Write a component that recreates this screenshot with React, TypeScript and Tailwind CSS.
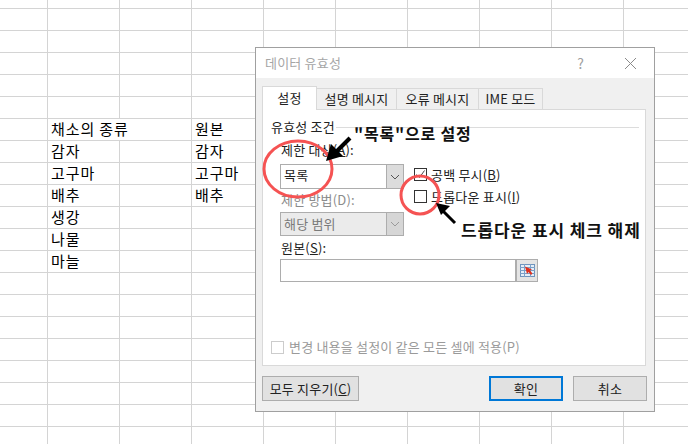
import React from 'react';

const FONT = '"Noto Sans CJK KR", "Noto Sans", sans-serif';

const rows: [string, string][] = [
  ['', ''], ['', ''], ['', ''], ['', ''], ['', ''],
  ['채소의 종류', '원본'],
  ['감자', '감자'],
  ['고구마', '고구마'],
  ['배추', '배추'],
  ['생강', ''],
  ['나물', ''],
  ['마늘', ''],
  ['', ''], ['', ''], ['', ''], ['', ''], ['', ''], ['', ''], ['', ''], ['', ''],
];

const Sheet = () => (
  <div className="grid grid-cols-[48px_72px_72px_72px_72px_72px_72px_72px_72px_72px] grid-rows-[9px] auto-rows-[22px] w-[688px] h-[444px] overflow-hidden text-[15px] leading-[20px] tracking-[0.9px] text-black">
    {Array.from({ length: 10 }).map((_, i) => (
      <div key={i} className="border-b border-r border-[#d4d4d4]" />
    ))}
    {rows.map((row, r) => (
      <React.Fragment key={r}>
        <div className="border-b border-r border-[#d4d4d4]" />
        {/* first cell overflows into the empty one on its right */}
        <div className={`border-b border-[#d4d4d4] pl-[3px] whitespace-nowrap ${row[0] === '채소의 종류' ? '' : 'border-r'}`}>{row[0]}</div>
        <div className="border-b border-r border-[#d4d4d4]" />
        <div className="border-b border-r border-[#d4d4d4] pl-[3px]">{row[1]}</div>
        {Array.from({ length: 6 }).map((_, i) => (
          <div key={i} className="border-b border-r border-[#d4d4d4]" />
        ))}
      </React.Fragment>
    ))}
  </div>
);

const Chevron = ({ color }: { color: string }) => (
  <svg width="10" height="6" viewBox="0 0 10 6" fill="none">
    <path d="M1 1l4 4 4-4" stroke={color} strokeWidth="1" />
  </svg>
);

const Check = ({ checked, disabled }: { checked?: boolean; disabled?: boolean }) => (
  <div className={`w-[13px] h-[13px] border bg-white flex items-center justify-center shrink-0 ${disabled ? 'border-[#cccccc]' : 'border-[#333333]'}`}>
    {checked && (
      <svg width="11" height="11" viewBox="0 0 11 11" fill="none">
        <path d="M1.5 5.5l3 3 5-7" stroke="#444444" strokeWidth="1" />
      </svg>
    )}
  </div>
);

const RefIcon = () => (
  <svg width="15" height="13" viewBox="0 0 15 13">
    <rect x="0.5" y="0.5" width="14" height="12" fill="#e4eef8" stroke="#6f94bd" />
    <path d="M0 3.5h15M0 6.5h15M0 9.5h15M4.5 0v13M10.5 0v13" stroke="#7ba0c8" strokeWidth="1" />
    <path d="M5 2.5l7 3-2 1 2.5 3-1.5 1.5-2.5-3-1.5 2z" fill="#e0301e" />
  </svg>
);

const Dialog = () => (
  <div className="absolute left-[255px] top-[47px] w-[400px] h-[365px] border border-[#a0a0a0] bg-[#f0f0f0] flex flex-col text-[13px] leading-[16px] tracking-[0.2px] text-[#222222]">
    {/* title bar */}
    <div className="h-[30px] bg-white flex items-center pl-[9px] shrink-0">
      <span className="text-[#a6a6a6]">데이터 유효성</span>
      <span className="ml-auto text-[#a0a0a0] text-[14px] mr-[40px]">?</span>
      <svg width="13" height="13" viewBox="0 0 13 13" className="mr-[17px]">
        <path d="M1 1l11 11M12 1L1 12" stroke="#8a8a8a" strokeWidth="1" />
      </svg>
    </div>

    {/* tabs */}
    <div className="flex items-end pl-[6px] h-[32px] shrink-0 relative z-10">
      <div className="w-[55px] h-[24px] bg-white border border-b-0 border-[#d9d9d9] flex items-center justify-center pb-[1px]">설정</div>
      <div className="w-[80px] h-[22px] border-y border-r border-[#d9d9d9] flex items-center justify-center">설명 메시지</div>
      <div className="w-[82px] h-[22px] border-y border-r border-[#d9d9d9] flex items-center justify-center">오류 메시지</div>
      <div className="w-[64px] h-[22px] border-y border-r border-[#d9d9d9] flex items-center justify-center">IME 모드</div>
    </div>

    {/* panel */}
    <div className="ml-[6px] w-[384px] h-[257px] -mt-[1px] bg-white border border-[#d9d9d9] shrink-0 flex flex-col pl-[8px] pr-[6px]">
      <div className="flex items-center h-[16px] mt-[9px]">
        <span className="whitespace-nowrap">유효성 조건</span>
        <div className="flex-1 h-px bg-[#dcdcdc] ml-[1px]" />
      </div>

      <div className="flex mt-[7px] pl-[9px]">
        <div className="w-[124px] flex flex-col">
          <span className="pl-[1px]">제한 대상(<u>A</u>):</span>
          <div className="mt-[6px] h-[25px] border border-[#adadad] flex items-center">
            <span className="pl-[3px] pb-[3px] flex-1">목록</span>
            <div className="w-[17px] h-full bg-[#dcdcdc] border-l border-[#adadad] flex items-center justify-center">
              <Chevron color="#555555" />
            </div>
          </div>
          <span className="pl-[1px] mt-[3px] text-[#8c8c8c]">제한 방법(D):</span>
          <div className="mt-[4px] h-[24px] border border-[#adadad] bg-[#ebebeb] flex items-center text-[#7a7a7a]">
            <span className="pl-[3px] flex-1">해당 범위</span>
            <div className="w-[17px] h-full bg-[#d6d6d6] border-l border-[#adadad] flex items-center justify-center">
              <Chevron color="#9a9a9a" />
            </div>
          </div>
        </div>
        <div className="ml-[10px] pt-[26px] flex flex-col gap-[9px]">
          <div className="flex items-center gap-[4px] h-[13px]">
            <Check checked />
            <span>공백 무시(<u>B</u>)</span>
          </div>
          <div className="flex items-center gap-[4px] h-[13px]">
            <Check />
            <span>드롭다운 표시(<u>I</u>)</span>
          </div>
        </div>
      </div>

      <span className="ml-[10px] mt-[4px]">원본(<u>S</u>):</span>
      <div className="ml-[9px] mt-[3px] w-[258px] h-[23px] border border-[#adadad] flex justify-end">
        <div className="w-[22px] h-full bg-[#e4e4e4] border-l-2 border-[#adadad] flex items-center justify-center">
          <RefIcon />
        </div>
      </div>

      <div className="flex items-center gap-[5px] mt-[57px] text-[#9a9a9a]">
        <Check disabled />
        <span>변경 내용을 설정이 같은 모든 셀에 적용(P)</span>
      </div>
    </div>

    {/* buttons */}
    <div className="flex mt-[10px] pl-[6px]">
      <div className="w-[97px] h-[25px] bg-[#e1e1e1] border border-[#adadad] flex items-center justify-center">모두 지우기(<u>C</u>)</div>
      <div className="ml-[130px] w-[74px] h-[25px] bg-[#e1e1e1] border-2 border-[#0078d7] flex items-center justify-center">확인</div>
      <div className="ml-[10px] w-[74px] h-[25px] bg-[#e1e1e1] border border-[#adadad] flex items-center justify-center">취소</div>
    </div>
  </div>
);

const Annotations = () => (
  <>
    <svg className="absolute left-0 top-0" width="688" height="444" viewBox="0 0 688 444" fill="none">
      <ellipse cx="298" cy="169" rx="34" ry="28" stroke="#f55353" strokeWidth="3" />
      <circle cx="420" cy="195" r="19" stroke="#f55353" strokeWidth="3" />
      <path d="M350 138L333 155" stroke="#000000" strokeWidth="4" />
      <path d="M326 161l5-17 12 12z" fill="#000000" />
      <path d="M455 223L441 209" stroke="#000000" strokeWidth="3" />
      <path d="M436 203l14 3-9 9z" fill="#000000" />
    </svg>
    <span className="absolute left-[354px] top-[122px] text-[16px] leading-[22px] tracking-[0.8px] font-bold text-[#111111] whitespace-nowrap">"목록"으로 설정</span>
    <span className="absolute left-[461px] top-[219px] text-[17px] leading-[22px] tracking-[0.9px] font-bold text-[#111111] whitespace-nowrap">드롭다운 표시 체크 해제</span>
  </>
);

export default function App() {
  return (
    <div className="relative w-[688px] h-[444px] overflow-hidden bg-white" style={{ fontFamily: FONT }}>
      <Sheet />
      <Dialog />
      <Annotations />
    </div>
  );
}
